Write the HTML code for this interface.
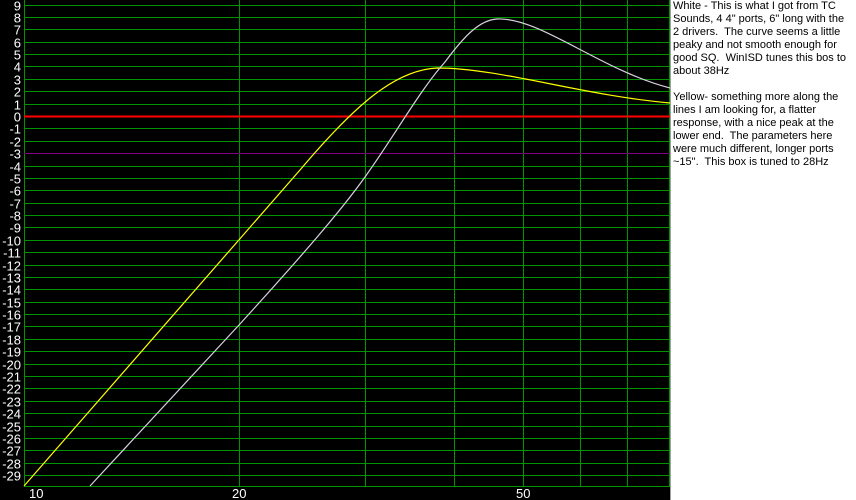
<!DOCTYPE html>
<html><head><meta charset="utf-8"><style>
html,body{margin:0;padding:0;width:856px;height:500px;overflow:hidden;background:#fff}
#c{position:absolute;left:0;top:0}
#t{position:absolute;left:673px;top:0;width:178px;font-family:"Liberation Sans",Arial,sans-serif;font-size:11px;line-height:13px;color:#000}
</style></head><body>
<svg id="c" width="856" height="500" xmlns="http://www.w3.org/2000/svg">
<rect x="0" y="0" width="670" height="500" fill="#000"/>
<rect x="670" y="0" width="1" height="500" fill="#a0a0a0"/>
<g id="grid" stroke="#009400" stroke-width="1" shape-rendering="crispEdges"></g>
<line x1="24" y1="153.5" x2="670" y2="153.5" stroke="#800080" shape-rendering="crispEdges"/>
<line x1="24" y1="116.5" x2="670" y2="116.5" stroke="#ff0000" stroke-width="2" shape-rendering="crispEdges"/>
<path d="M24,486 L300,170 C355,105 395,70 437,68 C500,68 580,95 670,103" fill="none" stroke="#ffff00" stroke-width="1.2"/>
<path d="M90,486 L239,325 C300,258 340,212 365,177 C395,135 420,90 445,62 C465,35 480,20 497,19 C540,17 600,70 670,88" fill="none" stroke="#d8d0e0" stroke-width="1.2"/>
<g id="lab" fill="#fff" font-family="Liberation Sans,Arial,sans-serif" font-size="13"></g>
<g fill="#fff" font-family="Liberation Sans,Arial,sans-serif" font-size="13">
<text x="29" y="498">10</text><text x="232" y="498">20</text><text x="516" y="498">50</text>
</g>
</svg>
<div id="t">White - This is what I got from TC Sounds, 4 4" ports, 6" long with the 2 drivers.&nbsp; The curve seems a little peaky and not smooth enough for good SQ.&nbsp; WinISD tunes this bos to about 38Hz<br><br>Yellow- something more along the lines I am looking for, a flatter response, with a nice peak at the lower end.&nbsp; The parameters here were much different, longer ports ~15".&nbsp; This box is tuned to 28Hz</div>
<script>
var ns="http://www.w3.org/2000/svg",g=document.getElementById("grid"),l=document.getElementById("lab");
for(var d=9;d>=-30;d--){var y=Math.round(116-d*12.38)+0.5;if(d==-30)y=486.5;
var e=document.createElementNS(ns,"line");e.setAttribute("x1",24);e.setAttribute("x2",670);e.setAttribute("y1",y);e.setAttribute("y2",y);g.appendChild(e);
if(d>=-29){var t=document.createElementNS(ns,"text");t.setAttribute("x",21);t.setAttribute("y",y+5);t.setAttribute("text-anchor","end");t.textContent=d;l.appendChild(t);}}
[10,20,30,40,50,60,70,80].forEach(function(f){var x=Math.round(24+714*Math.log10(f/10))+0.5;if(f==80)x=669.5;
var e=document.createElementNS(ns,"line");e.setAttribute("x1",x);e.setAttribute("x2",x);e.setAttribute("y1",0);e.setAttribute("y2",486);g.appendChild(e);});
</script>
</body></html>
